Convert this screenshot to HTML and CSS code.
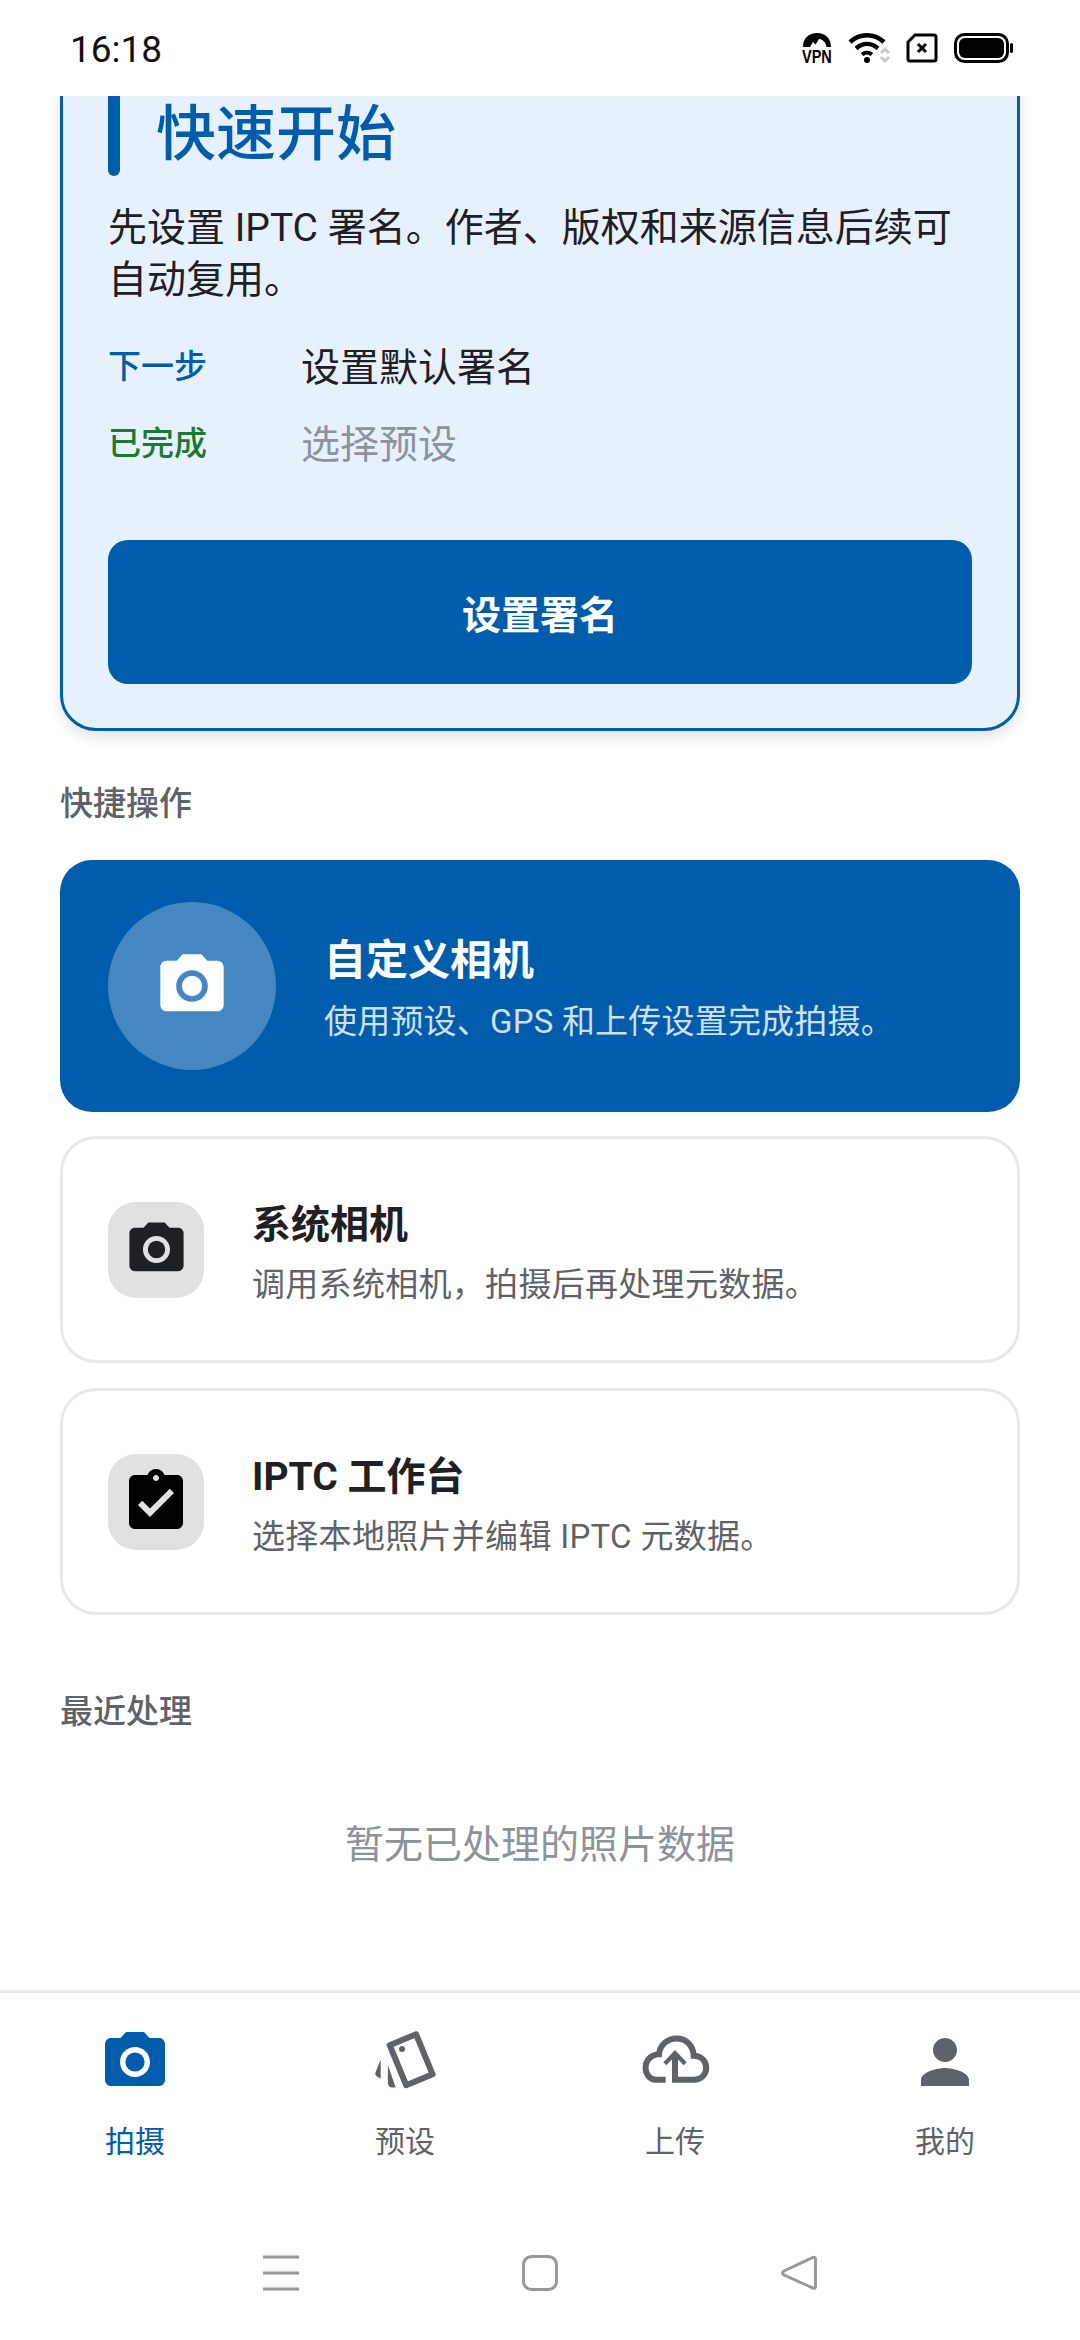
FILE: index.html
```html
<!DOCTYPE html>
<html lang="zh-CN">
<head>
    <meta charset="UTF-8">
    <meta name="viewport" content="width=device-width, initial-scale=1.0">
    <title>快速开始</title>
    <link rel="stylesheet" href="styles.css">
</head>
<body>
    <div class="phone">
        <div class="status-bar">
            <span class="clock">16:18</span>
            <div class="status-icons">
                <svg class="st-vpn" width="30" height="36" viewBox="0 0 30 36">
                    <path d="M1 15C1 6 7 1 15 1s14 5 14 14h-4.500C24 10 20 7 17 7l-5 8H1z" fill="#000"/>
                    <path d="M8 15l3-5 3 3 1 2z" fill="#fff"/>
                    <text x="0" y="23.800" class="vpn-text" transform="scale(1 1.3)">VPN</text>
                </svg>
                <svg class="st-wifi" width="42" height="30" viewBox="0 0 42 30">
                    <path d="M2 9C12 0 26 0 36 9" fill="none" stroke="#000" stroke-width="4.500"/>
                    <path d="M8 15.500C15 9.500 23 9.500 30 15.500" fill="none" stroke="#000" stroke-width="4.500"/>
                    <path d="M14 21.500C17 19 21 19 24 21.500" fill="none" stroke="#000" stroke-width="4"/>
                    <circle cx="19" cy="27" r="3" fill="#000"/>
                    <path d="M33 20l4-4 4 4M33 24l4 4 4-4" fill="none" stroke="#c8c8c8" stroke-width="3"/>
                </svg>
                <svg class="st-sim" width="32" height="30" viewBox="0 0 32 30">
                    <path d="M9 2h19a2 2 0 0 1 2 2v22a2 2 0 0 1-2 2H4a2 2 0 0 1-2-2V9z" fill="none" stroke="#000" stroke-width="3"/>
                    <path d="M12 11l8 8M20 11l-8 8" stroke="#000" stroke-width="3"/>
                </svg>
                <svg class="st-battery" width="60" height="30" viewBox="0 0 60 30">
                    <rect x="1.500" y="1.500" width="52" height="27" rx="9" fill="none" stroke="#000" stroke-width="3"/>
                    <rect x="5" y="5" width="45" height="20" rx="6" fill="#000"/>
                    <rect x="56" y="10" width="3" height="10" rx="1.500" fill="#000"/>
                </svg>
            </div>
        </div>

        <div class="content">
            <div class="start-card">
                <div class="start-head">
                    <span class="start-bar"></span>
                    <h1 class="start-title">快速开始</h1>
                </div>
                <p class="start-desc">先设置 IPTC 署名。作者、版权和来源信息后续可自动复用。</p>
                <div class="step-row">
                    <span class="step-tag tag-next">下一步</span>
                    <span class="step-name">设置默认署名</span>
                </div>
                <div class="step-row step-row-done">
                    <span class="step-tag tag-done">已完成</span>
                    <span class="step-name name-done">选择预设</span>
                </div>
                <button class="start-btn">设置署名</button>
            </div>

            <div class="section-label label-actions">快捷操作</div>

            <div class="hero-card">
                <div class="hero-icon">
                    <svg width="76" height="76" viewBox="0 0 24 24" fill="#fff">
                        <circle cx="12" cy="12" r="3.200"/>
                        <path d="M9 2L7.170 4H4c-1.100 0-2 .9-2 2v12c0 1.100.9 2 2 2h16c1.100 0 2-.9 2-2V6c0-1.100-.9-2-2-2h-3.170L15 2H9zm3 15c-2.760 0-5-2.240-5-5s2.240-5 5-5 5 2.240 5 5-2.240 5-5 5z"/>
                    </svg>
                </div>
                <div class="action-text">
                    <div class="hero-title">自定义相机</div>
                    <div class="hero-sub">使用预设、GPS 和上传设置完成拍摄。</div>
                </div>
            </div>

            <div class="action-card">
                <div class="action-icon">
                    <svg width="65" height="65" viewBox="0 0 24 24" fill="#1f2023">
                        <circle cx="12" cy="12" r="3.200"/>
                        <path d="M9 2L7.170 4H4c-1.100 0-2 .9-2 2v12c0 1.100.9 2 2 2h16c1.100 0 2-.9 2-2V6c0-1.100-.9-2-2-2h-3.170L15 2H9zm3 15c-2.760 0-5-2.240-5-5s2.240-5 5-5 5 2.240 5 5-2.240 5-5 5z"/>
                    </svg>
                </div>
                <div class="action-text">
                    <div class="action-title">系统相机</div>
                    <div class="action-sub">调用系统相机，拍摄后再处理元数据。</div>
                </div>
            </div>

            <div class="action-card action-card-last">
                <div class="action-icon">
                    <svg width="72" height="72" viewBox="0 0 24 24" fill="#000">
                        <path d="M19 3h-4.180C14.400 1.840 13.300 1 12 1c-1.300 0-2.400.84-2.820 2H5c-1.100 0-2 .9-2 2v14c0 1.100.9 2 2 2h14c1.100 0 2-.9 2-2V5c0-1.100-.9-2-2-2zm-7 0c.55 0 1 .45 1 1s-.45 1-1 1-1-.45-1-1 .45-1 1-1zm-2 14l-4-4 1.410-1.410L10 14.170l6.590-6.590L18 9l-8 8z"/>
                    </svg>
                </div>
                <div class="action-text">
                    <div class="action-title">IPTC 工作台</div>
                    <div class="action-sub">选择本地照片并编辑 IPTC 元数据。</div>
                </div>
            </div>

            <div class="section-label label-recent">最近处理</div>
            <div class="empty-text">暂无已处理的照片数据</div>
        </div>

        <div class="tab-bar">
            <div class="tab tab-active">
                <svg width="72" height="72" viewBox="0 0 24 24" fill="#015dab">
                    <circle cx="12" cy="12" r="3.200"/>
                    <path d="M9 2L7.170 4H4c-1.100 0-2 .9-2 2v12c0 1.100.9 2 2 2h16c1.100 0 2-.9 2-2V6c0-1.100-.9-2-2-2h-3.170L15 2H9zm3 15c-2.760 0-5-2.240-5-5s2.240-5 5-5 5 2.240 5 5-2.240 5-5 5z"/>
                </svg>
                <span>拍摄</span>
            </div>
            <div class="tab">
                <svg width="72" height="72" viewBox="0 0 24 24" fill="#5f6368">
                    <path d="M6.900 6.400L15.700 2.750 21.200 16.100 12.400 19.750z" fill="none" stroke="#5f6368" stroke-width="2" stroke-linejoin="round"/>
                    <circle cx="11" cy="7.700" r="1"/>
                    <path d="M3.900 11.200L2.200 15.300c-.3.8 0 1.200.5 1.500l1.200.8z"/>
                    <path d="M6.300 13v6c0 .9.6 1.500 1.400 1.500h1.200z"/>
                </svg>
                <span>预设</span>
            </div>
            <div class="tab">
                <svg width="72" height="72" viewBox="117 168 216 216">
                    <path d="M197 329h-30c-38 0-46-72 10-76 6-62 100-66 104 4 50 0 50 72 0 72h-56v-70" fill="none" stroke="#5f6368" stroke-width="18"/>
                    <path d="M225 240l35 37-9 9-26-27-26 27-9-9z" fill="#5f6368"/>
                </svg>
                <span>上传</span>
            </div>
            <div class="tab">
                <svg width="72" height="72" viewBox="0 0 24 24" fill="#5f6368">
                    <path d="M12 12c2.210 0 4-1.790 4-4s-1.790-4-4-4-4 1.790-4 4 1.790 4 4 4zm0 2c-2.670 0-8 1.340-8 4v2h16v-2c0-2.660-5.330-4-8-4z"/>
                </svg>
                <span>我的</span>
            </div>
        </div>

        <div class="sys-nav">
            <svg width="36" height="36" viewBox="0 0 36 36">
                <path d="M0 2h36M0 18h36M0 34h36" stroke="#999" stroke-width="3"/>
            </svg>
            <svg width="36" height="36" viewBox="0 0 36 36">
                <rect x="1.500" y="1.500" width="33" height="33" rx="8" fill="none" stroke="#999" stroke-width="3"/>
            </svg>
            <svg width="36" height="36" viewBox="0 0 36 36">
                <path d="M32 2.500q2.500-1 2.500 2v26.500q0 3-2.500 2L3 20q-3-2 0-4z" fill="none" stroke="#999" stroke-width="3"/>
            </svg>
        </div>
    </div>
</body>
</html>
```

FILE: styles.css
```css
* {
    box-sizing: border-box;
}
html, body {
    margin: 0;
    padding: 0;
    background: #fff;
}
body {
    font-family: Roboto, "Noto Sans CJK SC", sans-serif;
    color: #1f2023;
}
.phone {
    width: 1080px;
    height: 2340px;
    display: flex;
    flex-direction: column;
    overflow: hidden;
}

/* status bar */
.status-bar {
    height: 96px;
    flex: none;
    display: flex;
    align-items: center;
    justify-content: space-between;
    padding: 0 66px 0 70px;
    background: #fff;
    position: relative;
    z-index: 2;
}
.clock {
    font-size: 37px;
    color: #111;
    position: relative;
    top: 1px;
}
.status-icons {
    display: flex;
    align-items: center;
    gap: 16px;
}
.st-vpn {
    margin-top: 4px;
}
.vpn-text {
    font-family: "Liberation Sans", sans-serif;
    font-size: 14.5px;
    font-weight: 700;
}

/* scrolled content */
.content {
    flex: 1;
    min-height: 0;
    padding: 0 60px;
}
.start-card {
    margin-top: -71px;
    padding: 48px 45px 44px;
    background: #e7f1fe;
    border: 3px solid #015dab;
    border-radius: 36px;
    box-shadow: 0 6px 14px rgba(0, 0, 0, 0.12);
}
.start-head {
    display: flex;
    align-items: center;
    gap: 36px;
    height: 100px;
}
.start-bar {
    width: 12px;
    height: 100px;
    background: #015dab;
    border-radius: 6px;
}
.start-title {
    margin: 0;
    font-size: 60px;
    font-weight: 500;
    color: #015dab;
    line-height: 80px;
    position: relative;
    top: 9px;
}
.start-desc {
    margin: 26px 0 0;
    font-size: 39px;
    line-height: 52px;
}
.step-row {
    display: flex;
    align-items: center;
    height: 52px;
    margin-top: 32px;
}
.step-row-done {
    margin-top: 25px;
}
.step-tag {
    width: 193px;
    flex: none;
    font-size: 33px;
    font-weight: 500;
}
.tag-next {
    color: #015dab;
}
.tag-done {
    color: #1b7a2f;
}
.step-name {
    font-size: 39px;
}
.name-done {
    color: #8e9399;
}
.start-btn {
    display: block;
    width: 100%;
    height: 144px;
    margin-top: 73px;
    border: none;
    border-radius: 20px;
    background: #015dab;
    color: #fff;
    font-family: inherit;
    font-size: 39px;
    font-weight: 700;
}

.section-label {
    font-size: 33px;
    font-weight: 500;
    color: #5f6368;
    line-height: 44px;
}
.label-actions {
    margin-top: 51px;
}
.label-recent {
    margin-top: 75px;
}

/* action cards */
.hero-card {
    height: 252px;
    margin-top: 34px;
    padding-left: 48px;
    display: flex;
    align-items: center;
    gap: 48px;
    background: #015dab;
    border-radius: 32px;
}
.hero-icon {
    width: 168px;
    height: 168px;
    flex: none;
    border-radius: 50%;
    background: rgba(255, 255, 255, 0.27);
    display: flex;
    align-items: center;
    justify-content: center;
}
.action-text {
    margin-top: 7px;
}
.hero-title {
    font-size: 42px;
    font-weight: 700;
    line-height: 52px;
    color: #fff;
}
.hero-sub {
    margin-top: 12px;
    font-size: 33px;
    letter-spacing: 0.2px;
    line-height: 46px;
    color: #cfe0f2;
}
.action-card {
    height: 227px;
    margin-top: 24px;
    padding-left: 45px;
    display: flex;
    align-items: center;
    gap: 48px;
    background: #fff;
    border: 3px solid #e8e8ec;
    border-radius: 36px;
}
.action-card-last {
    margin-top: 25px;
}
.action-icon {
    width: 96px;
    height: 96px;
    flex: none;
    border-radius: 28px;
    background: #e1e1e1;
    display: flex;
    align-items: center;
    justify-content: center;
}
.action-title {
    font-size: 39px;
    font-weight: 700;
    line-height: 52px;
}
.action-sub {
    margin-top: 11px;
    font-size: 33px;
    letter-spacing: 0.3px;
    line-height: 46px;
    color: #5f6368;
}
.empty-text {
    margin-top: 83px;
    text-align: center;
    font-size: 39px;
    line-height: 56px;
    color: #8e9399;
}

/* bottom tabs */
.tab-bar {
    flex: none;
    display: flex;
    height: 216px;
    padding-top: 33px;
    border-top: 3px solid #ebebef;
    background: #fff;
}
.tab {
    width: 270px;
    display: flex;
    flex-direction: column;
    align-items: center;
    gap: 24px;
    font-size: 30px;
    line-height: 40px;
    color: #5f6368;
}
.tab-active {
    color: #015dab;
}

.sys-nav {
    flex: none;
    height: 134px;
    display: flex;
    align-items: center;
    justify-content: center;
    gap: 223px;
}
```
